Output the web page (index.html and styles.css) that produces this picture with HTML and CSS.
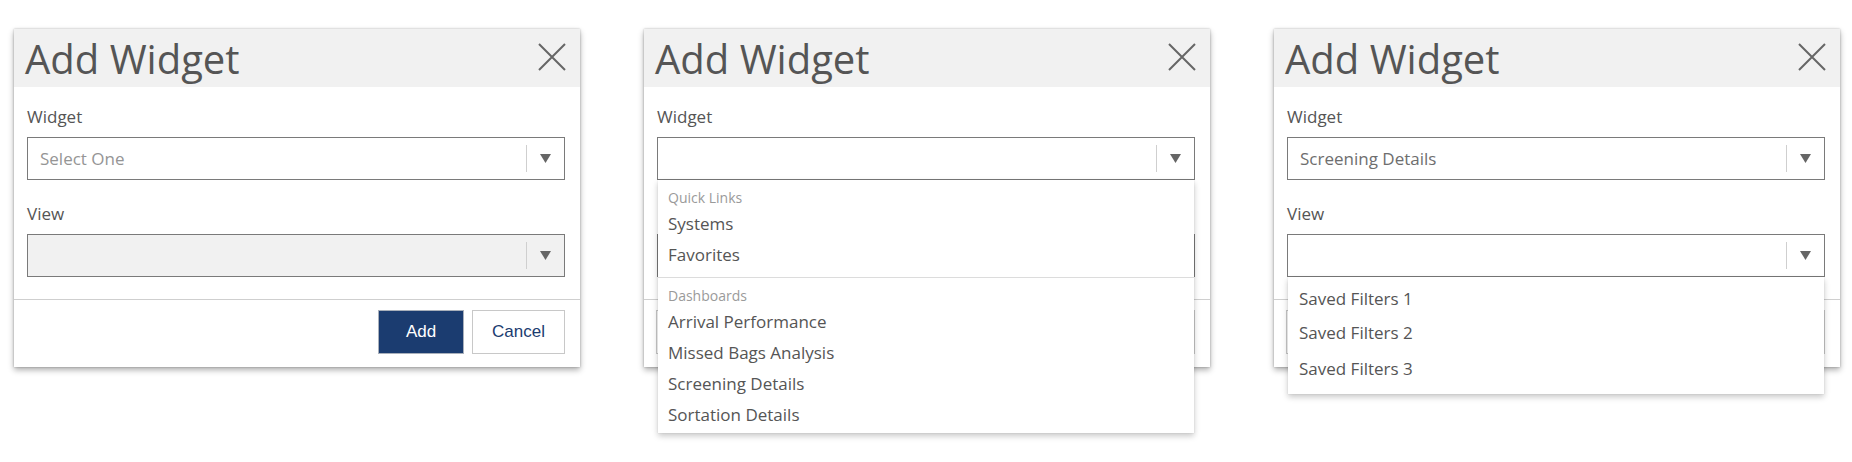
FILE: index.html
```html
<!DOCTYPE html>
<html lang="en">
<head>
<meta charset="utf-8">
<title>Add Widget</title>
<link rel="stylesheet" href="styles.css">
</head>
<body>
<div class="page">

  <section class="dialog">
    <header class="dialog-header">
      <h1 class="dialog-title">Add Widget</h1>
      <button class="close-btn" aria-label="Close">
        <svg width="28" height="28" viewBox="0 0 28 28"><path d="M1 1 L27 27 M27 1 L1 27" stroke="#666" stroke-width="2" fill="none"/></svg>
      </button>
    </header>
    <div class="dialog-body">
      <div class="field">
        <label class="field-label">Widget</label>
        <div class="select">
          <span class="select-value placeholder">Select One</span>
          <span class="select-arrow"><svg width="11" height="9" viewBox="0 0 11 9"><path d="M0 0 H11 L5.5 9 Z" fill="#666"/></svg></span>
        </div>
      </div>
      <div class="field">
        <label class="field-label">View</label>
        <div class="select disabled">
          <span class="select-value"></span>
          <span class="select-arrow"><svg width="11" height="9" viewBox="0 0 11 9"><path d="M0 0 H11 L5.5 9 Z" fill="#666"/></svg></span>
        </div>
      </div>
    </div>
    <footer class="dialog-footer">
      <button class="btn btn-primary">Add</button>
      <button class="btn btn-secondary">Cancel</button>
    </footer>
  </section>

  <section class="dialog">
    <header class="dialog-header">
      <h1 class="dialog-title">Add Widget</h1>
      <button class="close-btn" aria-label="Close">
        <svg width="28" height="28" viewBox="0 0 28 28"><path d="M1 1 L27 27 M27 1 L1 27" stroke="#666" stroke-width="2" fill="none"/></svg>
      </button>
    </header>
    <div class="dialog-body">
      <div class="field">
        <label class="field-label">Widget</label>
        <div class="select">
          <span class="select-value"></span>
          <span class="select-arrow"><svg width="11" height="9" viewBox="0 0 11 9"><path d="M0 0 H11 L5.5 9 Z" fill="#666"/></svg></span>
        </div>
        <div class="menu">
          <div class="menu-group">
            <div class="menu-heading">Quick Links</div>
            <div class="menu-item">Systems</div>
            <div class="menu-item">Favorites</div>
          </div>
          <div class="menu-group last">
            <div class="menu-heading">Dashboards</div>
            <div class="menu-item">Arrival Performance</div>
            <div class="menu-item">Missed Bags Analysis</div>
            <div class="menu-item">Screening Details</div>
            <div class="menu-item">Sortation Details</div>
          </div>
        </div>
      </div>
      <div class="field">
        <label class="field-label covered">View</label>
        <div class="select">
          <span class="select-value"></span>
          <span class="select-arrow"><svg width="11" height="9" viewBox="0 0 11 9"><path d="M0 0 H11 L5.5 9 Z" fill="#666"/></svg></span>
        </div>
      </div>
    </div>
    <footer class="dialog-footer">
      <div class="footer-ghost"></div>
      <button class="btn btn-primary covered">Add</button>
      <button class="btn btn-secondary covered">Cancel</button>
    </footer>
  </section>

  <section class="dialog">
    <header class="dialog-header">
      <h1 class="dialog-title">Add Widget</h1>
      <button class="close-btn" aria-label="Close">
        <svg width="28" height="28" viewBox="0 0 28 28"><path d="M1 1 L27 27 M27 1 L1 27" stroke="#666" stroke-width="2" fill="none"/></svg>
      </button>
    </header>
    <div class="dialog-body">
      <div class="field">
        <label class="field-label">Widget</label>
        <div class="select">
          <span class="select-value">Screening Details</span>
          <span class="select-arrow"><svg width="11" height="9" viewBox="0 0 11 9"><path d="M0 0 H11 L5.5 9 Z" fill="#666"/></svg></span>
        </div>
      </div>
      <div class="field">
        <label class="field-label">View</label>
        <div class="select">
          <span class="select-value"></span>
          <span class="select-arrow"><svg width="11" height="9" viewBox="0 0 11 9"><path d="M0 0 H11 L5.5 9 Z" fill="#666"/></svg></span>
        </div>
        <div class="menu menu-simple">
          <div class="menu-item tall">Saved Filters 1</div>
          <div class="menu-item tall">Saved Filters 2</div>
          <div class="menu-item tall">Saved Filters 3</div>
        </div>
      </div>
    </div>
    <footer class="dialog-footer">
      <div class="footer-ghost"></div>
      <button class="btn btn-primary covered">Add</button>
      <button class="btn btn-secondary covered">Cancel</button>
    </footer>
  </section>

</div>
</body>
</html>
```

FILE: styles.css
```css
* { box-sizing: border-box; }

html, body {
  margin: 0;
  padding: 0;
  background: #fff;
  min-height: 462px;
}

body {
  font-family: "Open Sans", "Liberation Sans", sans-serif;
  color: #555;
}

.page {
  display: flex;
  align-items: flex-start;
  gap: 64px;
  padding: 29px 0 0 14px;
  min-height: 462px;
}

.dialog {
  width: 566px;
  flex: 0 0 566px;
  background: #fff;
  box-shadow: 0 3px 6px rgba(0, 0, 0, 0.32), 0 0 2px rgba(0, 0, 0, 0.25);
  position: relative;
}

.dialog-header {
  height: 58px;
  background: #f1f1f1;
  display: flex;
  align-items: center;
  justify-content: space-between;
  padding: 0 14px 0 11px;
}

.dialog-title {
  margin: 0;
  font-size: 40px;
  font-weight: 400;
  line-height: 58px;
  color: #555;
  padding-top: 2px;
}

.close-btn {
  border: 0;
  background: none;
  padding: 0;
  width: 28px;
  height: 28px;
  display: block;
  margin-top: -2px;
}

.close-btn svg { display: block; }

.dialog-body {
  padding: 18px 15px 22px 13px;
  display: flex;
  flex-direction: column;
  gap: 22px;
}

.field {
  position: relative;
}

.field-label {
  display: block;
  font-size: 17px;
  line-height: 24px;
  color: #555;
  margin-bottom: 8px;
}

.covered {
  visibility: hidden;
}

.select {
  height: 43px;
  border: 1px solid #7a7a7a;
  background: #fff;
  display: flex;
  align-items: center;
  padding-left: 12px;
}

.select.disabled {
  background: #f1f1f1;
}

.select-value {
  flex: 1;
  font-size: 17px;
  color: #6e6e6e;
  white-space: nowrap;
}

.select-value.placeholder {
  color: #959595;
}

.select-arrow {
  width: 38px;
  height: 27px;
  border-left: 1px solid #cfcfcf;
  display: flex;
  align-items: center;
  justify-content: center;
}

.select-arrow svg { display: block; }

.menu {
  position: absolute;
  top: 100%;
  left: 1px;
  right: 1px;
  background: #fff;
  z-index: 10;
  box-shadow: 0 3px 6px rgba(0, 0, 0, 0.22), 0 0 1px rgba(0, 0, 0, 0.15);
}

.menu-group {
  padding: 8px 0 7px;
}

.menu-group + .menu-group {
  border-top: 1px solid #dcdcdc;
}

.menu-group.last {
  padding-bottom: 3px;
}

.menu-heading {
  font-size: 14px;
  line-height: 20px;
  color: #9a9a9a;
  padding-left: 10px;
}

.menu-item {
  font-size: 17px;
  line-height: 31px;
  color: #555;
  padding-left: 10px;
}

.menu-simple {
  padding: 5px 0 7px;
}

.menu-item.tall {
  line-height: 34px;
  padding-left: 11px;
}

.menu-item.tall:last-child {
  line-height: 36px;
  padding-top: 1px;
}

.dialog-footer {
  border-top: 1px solid #cfcfcf;
  padding: 10px 15px 13px 12px;
  display: flex;
  justify-content: flex-end;
  gap: 8px;
  position: relative;
}

.footer-ghost {
  flex: 1;
  height: 44px;
  border: 1px solid #c8c8c8;
}

.btn {
  height: 44px;
  font-family: "Liberation Sans", Arial, sans-serif;
  font-size: 17px;
  padding: 0;
  cursor: pointer;
}

.btn.covered {
  visibility: visible;
  color: transparent;
}

.btn-primary {
  width: 86px;
  background: #1b3c70;
  color: #fff;
  border: 1px solid #a9b0bb;
}

.btn-secondary {
  width: 93px;
  background: #fff;
  color: #1b3c70;
  border: 1px solid #c8c8c8;
}
```
